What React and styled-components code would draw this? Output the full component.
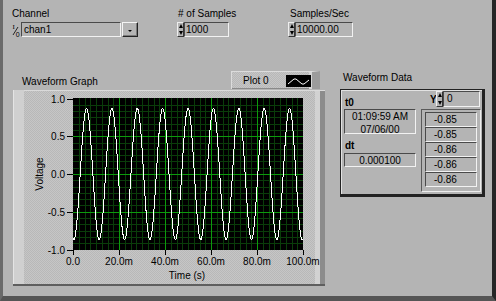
import React from 'react'
import styled, { createGlobalStyle } from 'styled-components'

const GlobalStyle = createGlobalStyle`
  body {
    margin: 0;
    background: #b4b4b4;
  }
`

const dotted = `
  background-color: #c6c6c6;
  background-image: repeating-conic-gradient(#b8b8b8 0 25%, transparent 0 50%);
  background-size: 2px 2px;
`

const Window = styled.div`
  box-sizing: border-box;
  width: 496px;
  height: 301px;
  background: #b4b4b4;
  border-left: 3px solid #6a6a6a;
  border-right: 4px solid #262626;
  border-bottom: 5px solid #555;
  font-family: "Liberation Sans", Arial, sans-serif;
  font-size: 10px;
  color: #000;
  overflow: hidden;
`

const TopRow = styled.div`
  display: flex;
  padding: 8px 0 0 9px;
`

const Field = styled.div`
  width: ${p => p.$width}px;
  display: flex;
  flex-direction: column;
  gap: 2px;
`

const Label = styled.div`
  line-height: 12px;
  padding-left: ${p => p.$indent || 0}px;
  white-space: nowrap;
`

const Control = styled.div`
  display: flex;
  height: 15px;
`

const Sunken = styled.div`
  box-sizing: border-box;
  width: ${p => p.$width}px;
  height: ${p => p.$height || 15}px;
  border: 1px solid;
  border-color: #4a4a4a #f2f2f2 #f2f2f2 #4a4a4a;
  padding-left: ${p => p.$pad ?? 2}px;
  line-height: 13px;
  text-align: ${p => p.$center ? 'center' : 'left'};
  white-space: nowrap;
`

const DropButton = styled.div`
  box-sizing: border-box;
  width: 16px;
  height: 15px;
  margin-left: 1px;
  border: 1px solid;
  border-color: #f4f4f4 #222 #222 #f4f4f4;
  box-shadow: inset -1px -1px 0 #7a7a7a;
  display: flex;
  align-items: center;
  justify-content: center;
  &::after {
    content: '';
    margin-top: 2px;
    border-left: 2px solid transparent;
    border-right: 2px solid transparent;
    border-top: 2px solid #000;
  }
`

const Spinner = styled.div`
  box-sizing: border-box;
  width: 7px;
  height: ${p => p.$height || 15}px;
  display: flex;
  flex-direction: column;
  justify-content: space-between;
  align-items: center;
  padding: 1px 0;
  border: 1px solid;
  border-color: #eee #333 #333 #eee;
  background: #b4b4b4;
`

const Arrow = styled.div`
  width: 0;
  height: 0;
  border-left: 2.5px solid transparent;
  border-right: 2.5px solid transparent;
  ${p => p.$up ? 'border-bottom: 4px solid #000;' : 'border-top: 4px solid #000;'}
`

const MainRow = styled.div`
  display: flex;
  align-items: flex-start;
  margin-top: 34px;
  padding-left: 10px;
  gap: 15px;
`

const GraphSection = styled.div`
  display: flex;
  flex-direction: column;
  width: 312px;
`

const GraphHeader = styled.div`
  display: flex;
  align-items: flex-end;
  height: 19px;
`

const GraphLabel = styled(Label)`
  padding: 0 0 2px 9px;
`

const Legend = styled.div`
  box-sizing: border-box;
  margin: 0 5px 1px auto;
  width: 89px;
  height: 18px;
  display: flex;
  align-items: center;
  padding-left: 11px;
  ${dotted}
  border-top: 1px solid #dcdcdc;
  border-left: 1px solid #dcdcdc;
  border-right: 8px solid #9c9c9c;
  box-shadow: inset -3px 0 0 #d6d6d6, inset 0 -1px 0 #8a8a8a;
  line-height: 12px;
`

const Swatch = styled.svg`
  margin-left: auto;
  margin-right: 1px;
  display: block;
  background: #000;
`

const GraphFrame = styled.div`
  width: 312px;
  height: 196px;
  ${dotted}
  box-shadow:
    inset 0 -2px 0 #5e5e5e,
    inset 1px 0 0 #e4e4e4,
    inset 11px 0 0 #d0d0d0,
    inset 0 1px 0 #dadada,
    inset -5px 0 0 #8c8c8c,
    inset -10px 0 0 #d2d2d2;
  svg { display: block; }
`

const DataSection = styled.div`
  display: flex;
  flex-direction: column;
  padding-top: 1px;
`

const DataLabel = styled(Label)`
  padding-left: 3px;
  margin-bottom: 5px;
`

const DataBox = styled.div`
  box-sizing: border-box;
  width: 145px;
  height: 108px;
  border: 1px solid #222;
  border-right-width: 3px;
  border-bottom-width: 3px;
  box-shadow: inset 1px 1px 0 #e2e2e2;
  padding: 1px 0 0 3px;
  display: flex;
  gap: 5px;
`

const Column = styled.div`
  display: flex;
  flex-direction: column;
  width: ${p => p.$width}px;
`

const BoldLabel = styled.div`
  font-weight: bold;
  line-height: 12px;
  height: ${p => p.$height}px;
  display: flex;
  align-items: flex-end;
  padding-left: ${p => p.$indent || 1}px;
  margin-top: ${p => p.$top || 0}px;
`

const IndexRow = styled.div`
  display: flex;
  align-items: center;
  height: 16px;
  margin-bottom: 2px;
`

const YLabel = styled.div`
  font-weight: bold;
  width: 15px;
  padding-left: 9px;
  box-sizing: border-box;
`

const ArrayFrame = styled.div`
  box-sizing: border-box;
  width: 60px;
  height: 83px;
  border: 1px solid;
  border-color: #5a5a5a #ececec #ececec #5a5a5a;
  padding: 2px 3px 0 3px;
  display: flex;
  flex-direction: column;
`

const Element = styled(Sunken)`
  width: 52px;
  padding-left: 8px;
`

const IOIcon = () => (
  <svg width="9" height="15" viewBox="0 0 9 15">
    <text x="0.5" y="7" fontSize="7" fontFamily="Liberation Serif, serif">I</text>
    <line x1="1" y1="13" x2="6" y2="5" stroke="#000" strokeWidth="0.8" />
    <text x="3.8" y="14.5" fontSize="7" fontFamily="Liberation Sans, sans-serif">0</text>
  </svg>
)

// chart geometry, relative to the frame
const PX = 60, PY = 8, PW = 230, PH = 152
const valToY = v => PY + 0.5 + (1 - v) * (PH - 1) / 2

const wavePoints = (() => {
  const pts = []
  const f = 90.64
  for (let i = 0; i < 1000; i++) {
    const t = i / 10000
    const v = -0.868 * Math.cos(2 * Math.PI * f * t - 0.21)
    pts.push(`${(PX + (t / 0.1) * PW).toFixed(2)},${valToY(v).toFixed(2)}`)
  }
  return pts.join(' ')
})()

const WaveChart = () => {
  const vMinor = []
  for (let i = 1; i < 40; i++) {
    if (i % 8 === 0) continue
    vMinor.push(PX + Math.round(i * PW / 40) + 0.5)
  }
  const hMinor = []
  for (let i = 1; i < 24; i++) {
    if (i % 6 === 0) continue
    hMinor.push(Math.round(valToY(1 - i / 12)) + 0.5)
  }
  const xTicks = ['0.0', '20.0m', '40.0m', '60.0m', '80.0m', '100.0m']
  const yTicks = ['1.0', '0.5', '0.0', '-0.5', '-1.0']
  return (
    <svg width="312" height="196" fontFamily="Liberation Sans, Arial, sans-serif" fontSize="10">
      <rect x={PX} y={PY} width={PW} height={PH} fill="#000" />
      <g stroke="#0a3d0a" strokeWidth="1" shapeRendering="crispEdges">
        {vMinor.map(x => <line key={'v' + x} x1={x} y1={PY} x2={x} y2={PY + PH} />)}
        {hMinor.map(y => <line key={'h' + y} x1={PX} y1={y} x2={PX + PW} y2={y} />)}
      </g>
      <g stroke="#0c9a0c" strokeWidth="1" shapeRendering="crispEdges">
        {[1, 2, 3, 4].map(k => {
          const x = PX + k * 46 + 0.5
          return <line key={'mv' + k} x1={x} y1={PY} x2={x} y2={PY + PH} />
        })}
        {[1, 2, 3].map(k => {
          const y = Math.round(valToY(1 - k * 0.5)) + 0.5
          return <line key={'mh' + k} x1={PX} y1={y} x2={PX + PW} y2={y} />
        })}
      </g>
      <polyline points={wavePoints} fill="none" stroke="#fff" strokeWidth="1" shapeRendering="crispEdges" />
      <g stroke="#000" strokeWidth="1" shapeRendering="crispEdges">
        {yTicks.map((_, k) => {
          const y = Math.round(valToY(1 - k * 0.5)) + 0.5
          return <line key={'yt' + k} x1={PX - 6} y1={y} x2={PX} y2={y} />
        })}
        {xTicks.map((_, k) => {
          const x = PX + k * 46 + 0.5
          return <line key={'xt' + k} x1={x} y1={PY + PH} x2={x} y2={PY + PH + 5} />
        })}
      </g>
      {yTicks.map((t, k) => (
        <text key={'yl' + t} x={PX - 8} y={Math.round(valToY(1 - k * 0.5)) + 4} textAnchor="end">{t}</text>
      ))}
      {xTicks.map((t, k) => (
        <text key={'xl' + t} x={PX + k * 46} y={175} textAnchor="middle">{t}</text>
      ))}
      <text x={174} y={189} textAnchor="middle">Time (s)</text>
      <text transform="translate(30 84) rotate(-90)" textAnchor="middle">Voltage</text>
    </svg>
  )
}

const values = ['-0.85', '-0.85', '-0.86', '-0.86', '-0.86']

export default function App() {
  return (
    <Window>
      <GlobalStyle />
      <TopRow>
        <Field $width={165}>
          <Label>Channel</Label>
          <Control>
            <IOIcon />
            <Sunken $width={100}>chan1</Sunken>
            <DropButton />
          </Control>
        </Field>
        <Field $width={111}>
          <Label $indent={1}>{'# of Samples'}</Label>
          <Control>
            <Spinner><Arrow $up /><Arrow /></Spinner>
            <Sunken $width={45} $pad={1}>1000</Sunken>
          </Control>
        </Field>
        <Field $width={100}>
          <Label $indent={2}>Samples/Sec</Label>
          <Control>
            <Spinner><Arrow $up /><Arrow /></Spinner>
            <Sunken $width={58} $pad={1}>10000.00</Sunken>
          </Control>
        </Field>
      </TopRow>
      <MainRow>
        <GraphSection>
          <GraphHeader>
            <GraphLabel>Waveform Graph</GraphLabel>
            <Legend>
              Plot 0
              <Swatch width="25" height="12" viewBox="0 0 25 12">
                <polyline points="2,9 8,4 10,4 16,9 18,9 23,5" fill="none" stroke="#fff" strokeWidth="1" />
              </Swatch>
            </Legend>
          </GraphHeader>
          <GraphFrame>
            <WaveChart />
          </GraphFrame>
        </GraphSection>
        <DataSection>
          <DataLabel>Waveform Data</DataLabel>
          <DataBox>
            <Column $width={72}>
              <BoldLabel $height={18}>t0</BoldLabel>
              <Sunken $width={72} $height={25} $center $pad={0}>
                01:09:59 AM<br />07/06/00
              </Sunken>
              <BoldLabel $height={12} $top={6}>dt</BoldLabel>
              <Sunken $width={72} $height={14} $center $pad={0} style={{ marginTop: 1 }}>0.000100</Sunken>
            </Column>
            <Column $width={60}>
              <IndexRow>
                <YLabel>Y</YLabel>
                <Spinner $height={16}><Arrow $up /><Arrow /></Spinner>
                <Sunken $width={37} $height={16} $pad={3}>0</Sunken>
              </IndexRow>
              <ArrayFrame>
                {values.map((v, i) => <Element key={i} $width={52}>{v}</Element>)}
              </ArrayFrame>
            </Column>
          </DataBox>
        </DataSection>
      </MainRow>
    </Window>
  )
}
